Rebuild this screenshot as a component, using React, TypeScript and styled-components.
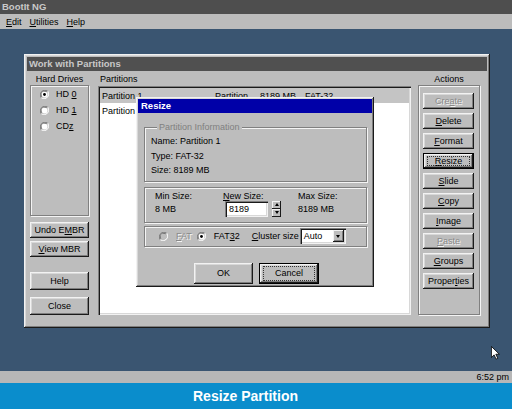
import React from "react";
import styled, { createGlobalStyle, css } from "styled-components";

const FACE = "#bdbdbd";

const GlobalStyle = createGlobalStyle`
  html, body { margin: 0; padding: 0; }
  body {
    width: 512px; height: 409px; overflow: hidden;
    font-family: "Liberation Sans", Arial, sans-serif;
    font-size: 9px; color: #000;
  }
  * { box-sizing: border-box; }
  u { text-decoration-thickness: 1px; text-underline-offset: 1px; }
`;

const raised = css`
  box-shadow: inset -1px -1px #1a1a1a, inset 1px 1px #f2f2f2,
    inset -2px -2px #7e7e7e, inset 2px 2px #d8d8d8;
`;
const sunken = css`
  box-shadow: inset 1px 1px #7e7e7e, inset 2px 2px #1a1a1a,
    inset -1px -1px #f2f2f2, inset -2px -2px #d8d8d8;
`;
const etched = css`
  border: 1px solid #808080;
  box-shadow: inset 1px 1px #f4f4f4, 1px 1px #f4f4f4;
`;

const Screen = styled.div`
  display: flex; flex-direction: column; width: 512px; height: 409px;
`;
const AppTitle = styled.div`
  height: 14px; line-height: 14px; padding-left: 2px;
  background: #4e4e4e; color: #c9c9c9; font-weight: bold; font-size: 9.5px;
`;
const MenuBar = styled.div`
  height: 15px; display: flex; align-items: center; gap: 8px;
  padding-left: 6px; background: #bcbcbc;
`;
const MenuItem = styled.span``;

const Desktop = styled.div`
  flex: 1; position: relative; background: #3a5571;
  padding: 25px 0 0 24px;
`;

const Window = styled.div`
  position: relative; width: 466px; height: 274px; padding: 3px;
  background: ${FACE}; display: flex; flex-direction: column;
  ${raised}
`;
const WinTitle = styled.div`
  height: 14px; line-height: 14px; padding-left: 2px;
  background: #505050; color: #c8c8c8; font-weight: bold; font-size: 9.5px;
`;
const WinBody = styled.div`
  flex: 1; display: flex; padding: 2px 7px 10px 3px;
`;
const Column = styled.div<{ $w?: number }>`
  display: flex; flex-direction: column;
  ${(p) => (p.$w ? `width: ${p.$w}px;` : "flex: 1;")}
`;
const MidColumn = styled(Column)`
  margin: 0 7px 0 9px;
`;
const ColLabel = styled.div<{ $left?: boolean }>`
  height: 12px; line-height: 12px;
  text-align: ${(p) => (p.$left ? "left" : "center")};
  padding-left: ${(p) => (p.$left ? "2px" : "0")};
`;

const DriveGroup = styled.div`
  ${etched}
  height: 131px; padding-left: 9px;
`;
const RadioRow = styled.div`
  height: 16px; display: flex; align-items: center; gap: 7px;
`;

const LeftButtons = styled.div`
  display: flex; flex-direction: column; margin-top: 6px;
`;

const Btn = styled.div<{
  $h?: number; $w?: number; $mt?: number; $disabled?: boolean; $focus?: boolean;
}>`
  position: relative; display: flex; align-items: center; justify-content: center;
  width: ${(p) => p.$w ?? 59}px; height: ${(p) => p.$h ?? 16}px;
  margin-top: ${(p) => p.$mt ?? 0}px;
  background: ${FACE}; white-space: nowrap;
  ${raised}
  ${(p) => p.$disabled && css`color: #8a8a8a; text-shadow: 1px 1px #f4f4f4;`}
  ${(p) =>
    p.$focus &&
    css`
      border: 1px solid #000;
      &::after {
        content: ""; position: absolute; inset: 2px 3px;
        border: 1px dotted #333; pointer-events: none;
      }
    `}
`;

const ListBox = styled.div`
  flex: 1; background: #fff; padding: 2px; margin-top: 1px;
  ${sunken}
`;
const ListRow = styled.div<{ $selected?: boolean }>`
  height: 15px; display: flex; align-items: center;
  background: ${(p) => (p.$selected ? "#c4c4c4" : "transparent")};
`;
const Cell = styled.span<{ $w: number }>`
  width: ${(p) => p.$w}px; padding-left: 2px; white-space: nowrap; overflow: hidden;
`;

const ActionGroup = styled.div`
  ${etched}
  flex: 1; display: flex; flex-direction: column; gap: 4px;
  padding: 7px 0 0 4px;
`;

/* Resize dialog */
const Dialog = styled.div`
  position: absolute; left: 112px; top: 43px; width: 238px; height: 190px;
  padding: 2px; background: ${FACE}; display: flex; flex-direction: column;
  ${raised}
`;
const DlgTitle = styled.div`
  height: 14px; line-height: 14px; padding-left: 3px;
  background: #0000a8; color: #fff; font-weight: bold; font-size: 9.5px;
`;
const DlgBody = styled.div`
  flex: 1; display: flex; flex-direction: column; padding: 9px 5px 0 6px;
`;
const InfoSet = styled.fieldset`
  margin: 0; padding: 2px 6px 3px 6px; min-width: 0;
  ${etched}
`;
const Legend = styled.legend`
  margin-left: 6px; padding: 0 2px; line-height: 10px; font-size: 9px;
  color: #808080; background: ${FACE};
`;
const InfoLine = styled.div`
  line-height: 14.5px; height: 14.5px;
`;
const SizeGroup = styled.div`
  ${etched}
  margin-top: 5px; height: 36px; padding: 3px 0 0 10px;
  display: grid; grid-template-columns: 68px 75px 1fr;
  grid-template-rows: 10px 16px; align-items: center;
`;
const SizeLabel = styled.div`
  line-height: 10px;
`;
const NewSizeCell = styled.div`
  display: flex; align-items: center;
`;
const TextInput = styled.div`
  width: 43px; height: 16px; margin-left: 2px; padding-left: 4px;
  line-height: 16px; background: #fff;
  ${sunken}
`;
const Spin = styled.div`
  display: flex; flex-direction: column; margin-left: 4px;
`;
const SpinBtn = styled.div`
  width: 9px; height: 8px; display: flex; align-items: center; justify-content: center;
  background: ${FACE};
  box-shadow: inset -1px -1px #1a1a1a, inset 1px 1px #f2f2f2;
`;
const Tri = styled.span<{ $down?: boolean }>`
  width: 0; height: 0;
  border-left: 2.5px solid transparent; border-right: 2.5px solid transparent;
  ${(p) =>
    p.$down ? "border-top: 3px solid #000;" : "border-bottom: 3px solid #000;"}
`;
const FatGroup = styled.div`
  ${etched}
  margin-top: 3px; height: 21px; display: flex; align-items: center;
  padding-left: 14px;
`;
const Opt = styled.span<{ $ml?: number; $disabled?: boolean }>`
  display: flex; align-items: center; gap: 8px;
  margin-left: ${(p) => p.$ml ?? 0}px;
  ${(p) => p.$disabled && css`color: #8a8a8a; text-shadow: 1px 1px #f4f4f4;`}
`;
const Select = styled.div`
  width: 46px; height: 16px; margin-left: 1px; padding: 2px 2px 2px 4px;
  display: flex; align-items: center; justify-content: space-between;
  background: #fff;
  ${sunken}
`;
const SelBtn = styled.div`
  width: 11px; height: 12px; display: flex; align-items: center; justify-content: center;
  background: ${FACE};
  box-shadow: inset -1px -1px #1a1a1a, inset 1px 1px #f2f2f2, inset -2px -2px #7e7e7e;
`;
const DlgButtons = styled.div`
  display: flex; justify-content: center; gap: 6px; margin-top: 16px;
  padding-left: 2px;
`;

const Cursor = styled.svg`
  position: absolute; left: 491px; top: 317px;
`;

const TaskBar = styled.div`
  height: 12px; line-height: 12px; background: #b7b7b7;
  text-align: right; padding-right: 3px;
`;
const Banner = styled.div`
  height: 26px; line-height: 26px; background: #0a8dcc; color: #fff;
  font-weight: bold; font-size: 14px; text-align: center; padding-right: 21px;
`;

const Radio: React.FC<{ checked?: boolean; disabled?: boolean }> = ({
  checked,
  disabled,
}) => (
  <svg width="9" height="9" viewBox="0 0 12 12">
    <path d="M10.2 1.8 A6 6 0 0 0 1.8 10.2" stroke="#7e7e7e" strokeWidth="1.4" fill="none" />
    <path d="M1.8 10.2 A6 6 0 0 0 10.2 1.8" stroke="#f4f4f4" strokeWidth="1.4" fill="none" />
    <path d="M9 3 A4.3 4.3 0 0 0 3 9" stroke="#1a1a1a" strokeWidth="1.2" fill="none" />
    <circle cx="6" cy="6" r="4" fill={disabled ? FACE : "#fff"} />
    {checked && <circle cx="6" cy="6" r="1.9" fill="#000" />}
  </svg>
);

export default function App() {
  return (
    <>
      <GlobalStyle />
      <Screen>
        <AppTitle>BootIt NG</AppTitle>
        <MenuBar>
          <MenuItem><u>E</u>dit</MenuItem>
          <MenuItem><u>U</u>tilities</MenuItem>
          <MenuItem><u>H</u>elp</MenuItem>
        </MenuBar>
        <Desktop>
          <Window>
            <WinTitle>Work with Partitions</WinTitle>
            <WinBody>
              <Column $w={59}>
                <ColLabel>Hard Drives</ColLabel>
                <DriveGroup>
                  <RadioRow><Radio checked /><span>HD <u>0</u></span></RadioRow>
                  <RadioRow><Radio /><span>HD <u>1</u></span></RadioRow>
                  <RadioRow><Radio /><span>CD<u>z</u></span></RadioRow>
                </DriveGroup>
                <LeftButtons>
                  <Btn>Undo E<u>M</u>BR</Btn>
                  <Btn $mt={3}><u>V</u>iew MBR</Btn>
                  <Btn $mt={15} $h={18}>Help</Btn>
                  <Btn $mt={7} $h={18}>Close</Btn>
                </LeftButtons>
              </Column>
              <MidColumn>
                <ColLabel $left>Partitions</ColLabel>
                <ListBox>
                  <ListRow $selected>
                    <Cell $w={113}>Partition 1</Cell>
                    <Cell $w={45}>Partition</Cell>
                    <Cell $w={45}>8189 MB</Cell>
                    <Cell $w={50}>FAT-32</Cell>
                  </ListRow>
                  <ListRow>
                    <Cell $w={113}>Partition 2</Cell>
                  </ListRow>
                </ListBox>
              </MidColumn>
              <Column $w={62}>
                <ColLabel>Actions</ColLabel>
                <ActionGroup>
                  <Btn $w={51} $disabled>Cre<u>a</u>te</Btn>
                  <Btn $w={51}><u>D</u>elete</Btn>
                  <Btn $w={51}><u>F</u>ormat</Btn>
                  <Btn $w={51} $focus><u>R</u>esize</Btn>
                  <Btn $w={51}><u>S</u>lide</Btn>
                  <Btn $w={51}><u>C</u>opy</Btn>
                  <Btn $w={51}><u>I</u>mage</Btn>
                  <Btn $w={51} $disabled><u>P</u>aste</Btn>
                  <Btn $w={51}><u>G</u>roups</Btn>
                  <Btn $w={51}>Proper<u>t</u>ies</Btn>
                </ActionGroup>
              </Column>
            </WinBody>

            <Dialog>
              <DlgTitle>Resize</DlgTitle>
              <DlgBody>
                <InfoSet>
                  <Legend>Partition Information</Legend>
                  <InfoLine>Name: Partition 1</InfoLine>
                  <InfoLine>Type: FAT-32</InfoLine>
                  <InfoLine>Size: 8189 MB</InfoLine>
                </InfoSet>
                <SizeGroup>
                  <SizeLabel>Min Size:</SizeLabel>
                  <SizeLabel><u>N</u>ew Size:</SizeLabel>
                  <SizeLabel>Max Size:</SizeLabel>
                  <div>8 MB</div>
                  <NewSizeCell>
                    <TextInput>8189</TextInput>
                    <Spin>
                      <SpinBtn><Tri /></SpinBtn>
                      <SpinBtn><Tri $down /></SpinBtn>
                    </Spin>
                  </NewSizeCell>
                  <div>8189 MB</div>
                </SizeGroup>
                <FatGroup>
                  <Opt $disabled><Radio disabled /><span><u>F</u>AT</span></Opt>
                  <Opt $ml={5}><Radio checked /><span>FAT<u>3</u>2</span></Opt>
                  <Opt $ml={12}><span><u>C</u>luster size</span></Opt>
                  <Select>
                    <span>Auto</span>
                    <SelBtn><Tri $down /></SelBtn>
                  </Select>
                </FatGroup>
                <DlgButtons>
                  <Btn $w={59} $h={21}>OK</Btn>
                  <Btn $w={60} $h={21} $focus>Cancel</Btn>
                </DlgButtons>
              </DlgBody>
            </Dialog>
          </Window>
          <Cursor width="9" height="14" viewBox="0 0 11 17">
            <path
              d="M0.5 0.5 L0.5 14 L3.8 10.8 L6.2 16 L8.3 15 L5.9 10 L10.2 10 Z"
              fill="#fff"
              stroke="#000"
              strokeWidth="1"
            />
          </Cursor>
        </Desktop>
        <TaskBar>6:52 pm</TaskBar>
        <Banner>Resize Partition</Banner>
      </Screen>
    </>
  );
}
